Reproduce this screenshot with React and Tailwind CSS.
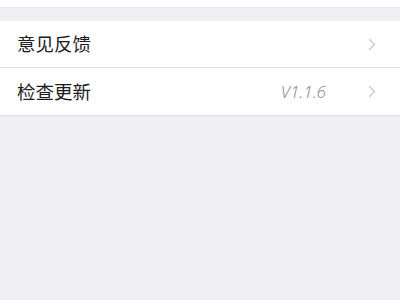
import React from "react";

function Chevron() {
  return (
    <svg width="8" height="13" viewBox="0 0 8 13" fill="none" className="shrink-0">
      <path d="M1.5 1.5 L6.5 6.5 L1.5 11.5" stroke="#c7c7cc" strokeWidth="1.3" strokeLinecap="round" strokeLinejoin="round" />
    </svg>
  );
}

function Row({ label, value, last }) {
  return (
    <div className={"flex items-center h-[47px] pl-[17px] pr-[24px] bg-white" + (last ? "" : " border-b border-[#e0e0e4]")}>
      <span className="flex-1 text-[18.5px] text-[#1c1c1e]">{label}</span>
      {value && <span className="italic font-light text-[17px] text-[#8e8e93] mr-[42px]">{value}</span>}
      <Chevron />
    </div>
  );
}

export default function App() {
  return (
    <div className="w-[400px] h-[300px] bg-[#efeff4] flex flex-col" style={{ fontFamily: '"Noto Sans", "Noto Sans CJK SC", sans-serif' }}>
      <div className="h-[8px] bg-white border-b border-[#e6e6ea]" />
      <div className="h-[13px]" />
      <div className="flex flex-col border-b border-[#e0e0e4]">
        <Row label="意见反馈" />
        <Row label="检查更新" value="V1.1.6" last />
      </div>
    </div>
  );
}
